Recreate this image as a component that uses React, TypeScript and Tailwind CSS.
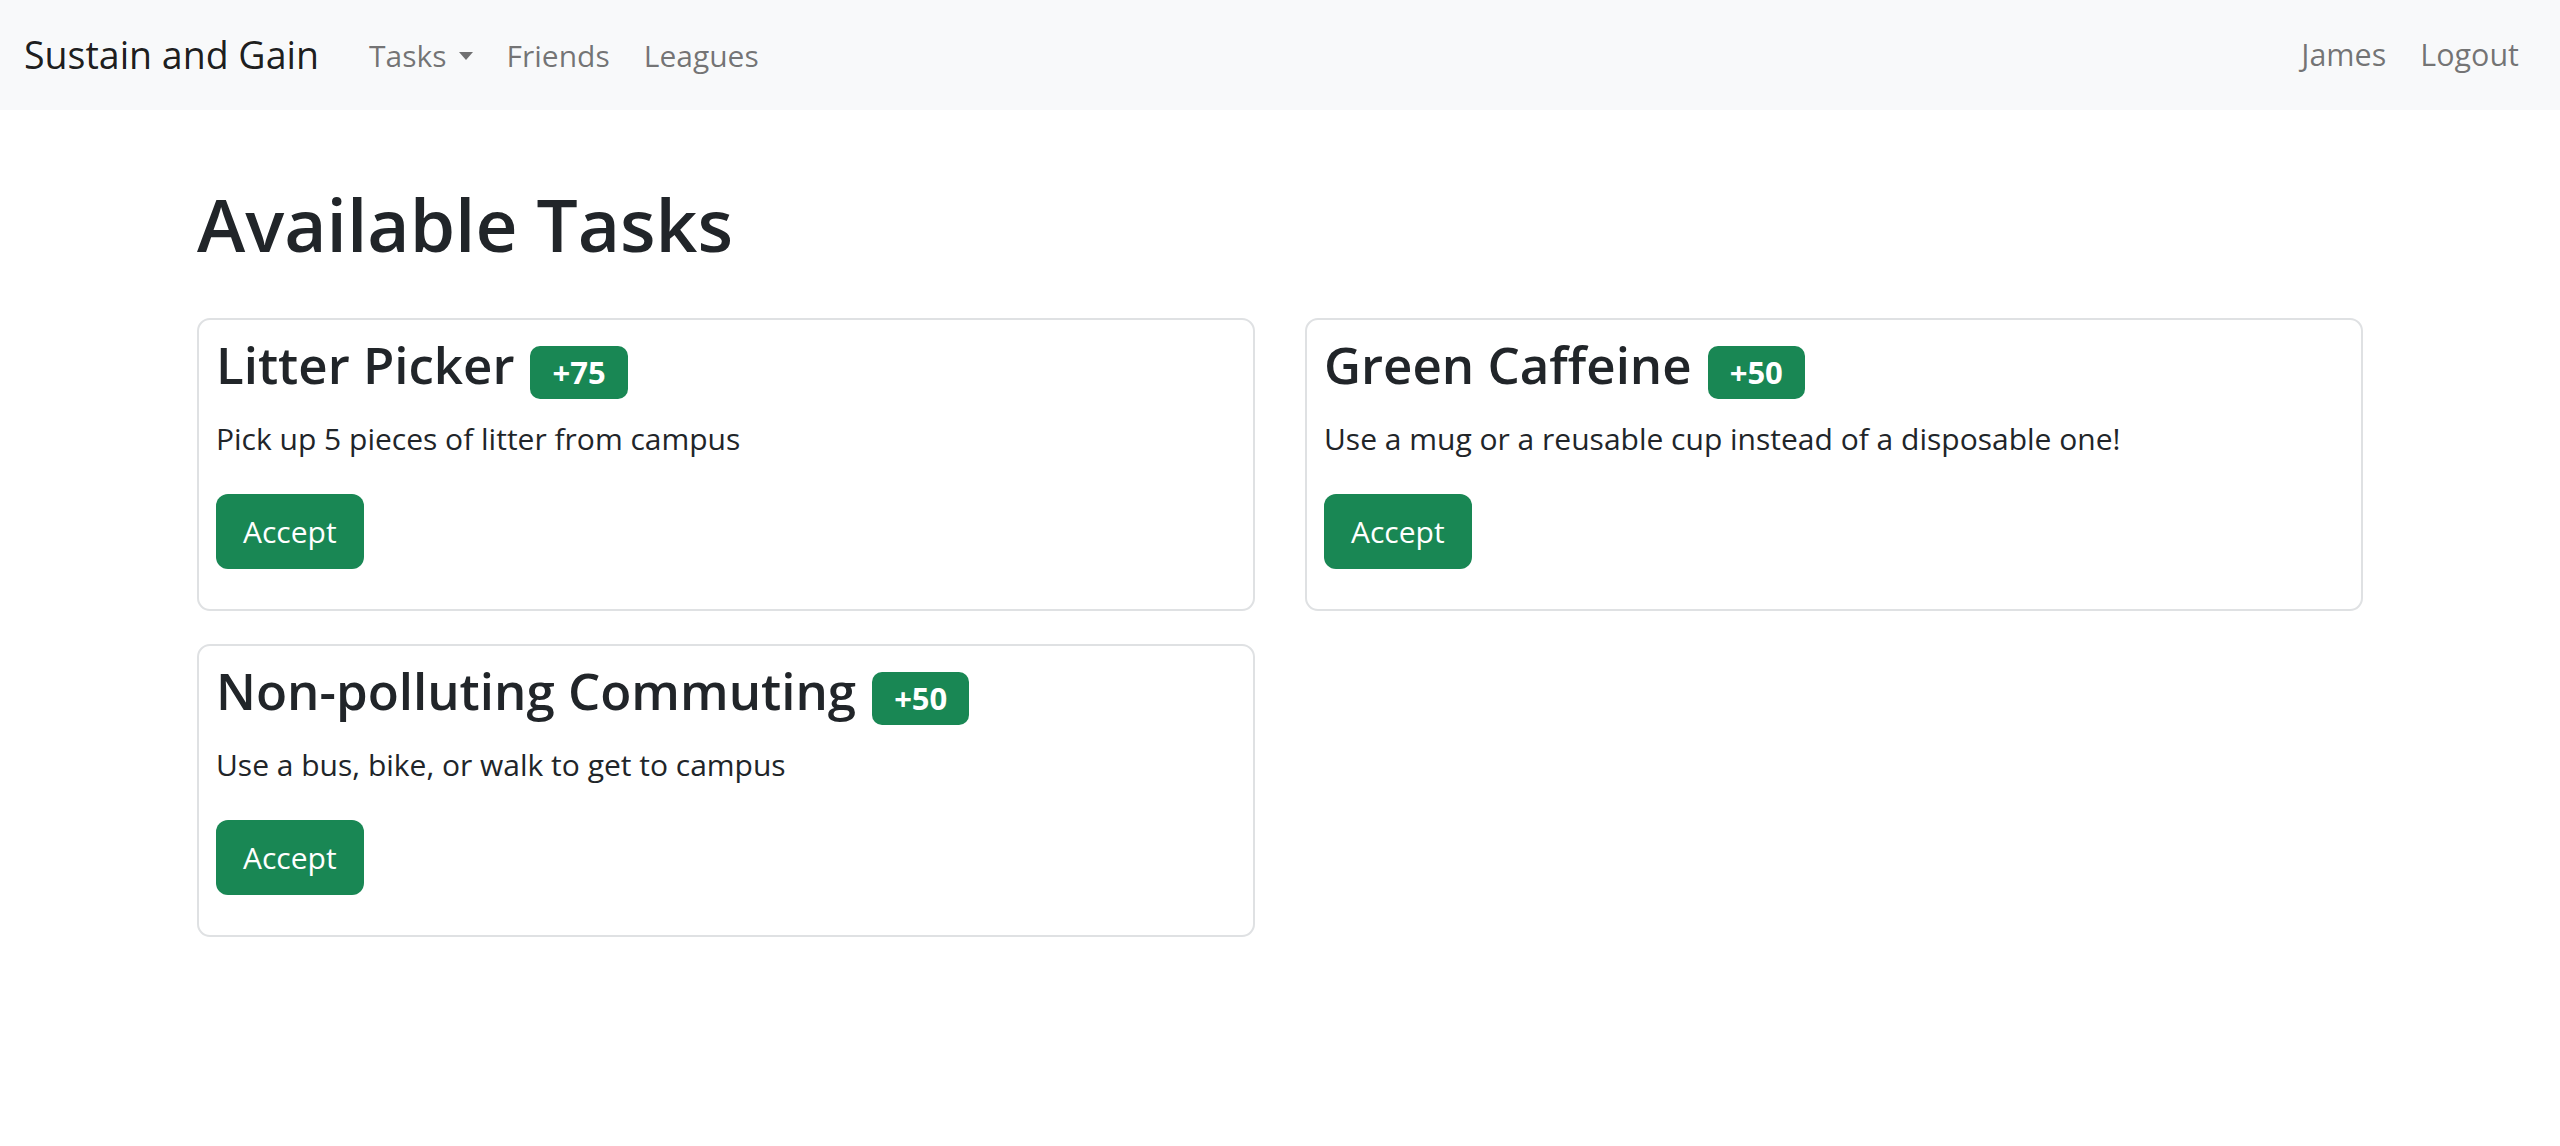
import React from "react";

const tasks = [
  { id: 1, name: "Litter Picker", points: 75, description: "Pick up 5 pieces of litter from campus" },
  { id: 2, name: "Green Caffeine", points: 50, description: "Use a mug or a reusable cup instead of a disposable one!" },
  { id: 3, name: "Non-polluting Commuting", points: 50, description: "Use a bus, bike, or walk to get to campus" },
];

function Navbar() {
  return (
    <nav className="h-[110px] bg-[#f8f9fa] flex items-center justify-between pl-[24px] pr-[41px]">
      <div className="flex items-center">
        <span className="text-[37.5px] text-[rgba(0,0,0,0.9)] mr-[50px]">Sustain and Gain</span>
        <div className="flex items-center gap-[34px] text-[30px] text-[rgba(0,0,0,0.55)]">
          <span className="flex items-center">
            Tasks
            <span className="ml-[12px] mt-[2px] w-0 h-0 border-l-[7.5px] border-r-[7.5px] border-t-[8px] border-l-transparent border-r-transparent border-t-[rgba(0,0,0,0.55)]" />
          </span>
          <span>Friends</span>
          <span>Leagues</span>
        </div>
      </div>
      <div className="flex items-center gap-[34px] text-[30.5px] text-[rgba(0,0,0,0.55)]">
        <span>James</span>
        <span>Logout</span>
      </div>
    </nav>
  );
}

function TaskCard({ name, points, description }: { name: string; points: number; description: string }) {
  return (
    <div className="border-2 border-[#dfe1e3] rounded-[13px] pt-[8px] pb-[40px] px-[17px] bg-white">
      <h2 className="text-[51px] leading-[72px] font-semibold text-[#212529]">
        {name}
        <span className="inline-block ml-[16px] align-baseline bg-[#198754] text-white text-[31px] font-bold leading-none px-[22px] py-[11px] rounded-[10px]">
          +{points}
        </span>
      </h2>
      <p className="mt-[16px] text-[30px] leading-[46px] text-[#212529]">{description}</p>
      <button className="mt-[32px] h-[75px] px-[27px] bg-[#198754] text-white text-[30px] rounded-[12px]">
        Accept
      </button>
    </div>
  );
}

export default function App() {
  return (
    <div className="min-h-screen bg-white font-['Open_Sans','Noto_Sans',sans-serif]">
      <Navbar />
      <main className="w-[2166px] mx-auto">
        <h1 className="mt-[66px] mb-[46px] text-[73px] leading-[96px] font-semibold text-[#212529]">
          Available Tasks
        </h1>
        <div className="grid grid-cols-2 gap-x-[50px] gap-y-[33px]">
          {tasks.map((task) => (
            <TaskCard key={task.id} name={task.name} points={task.points} description={task.description} />
          ))}
        </div>
      </main>
    </div>
  );
}
